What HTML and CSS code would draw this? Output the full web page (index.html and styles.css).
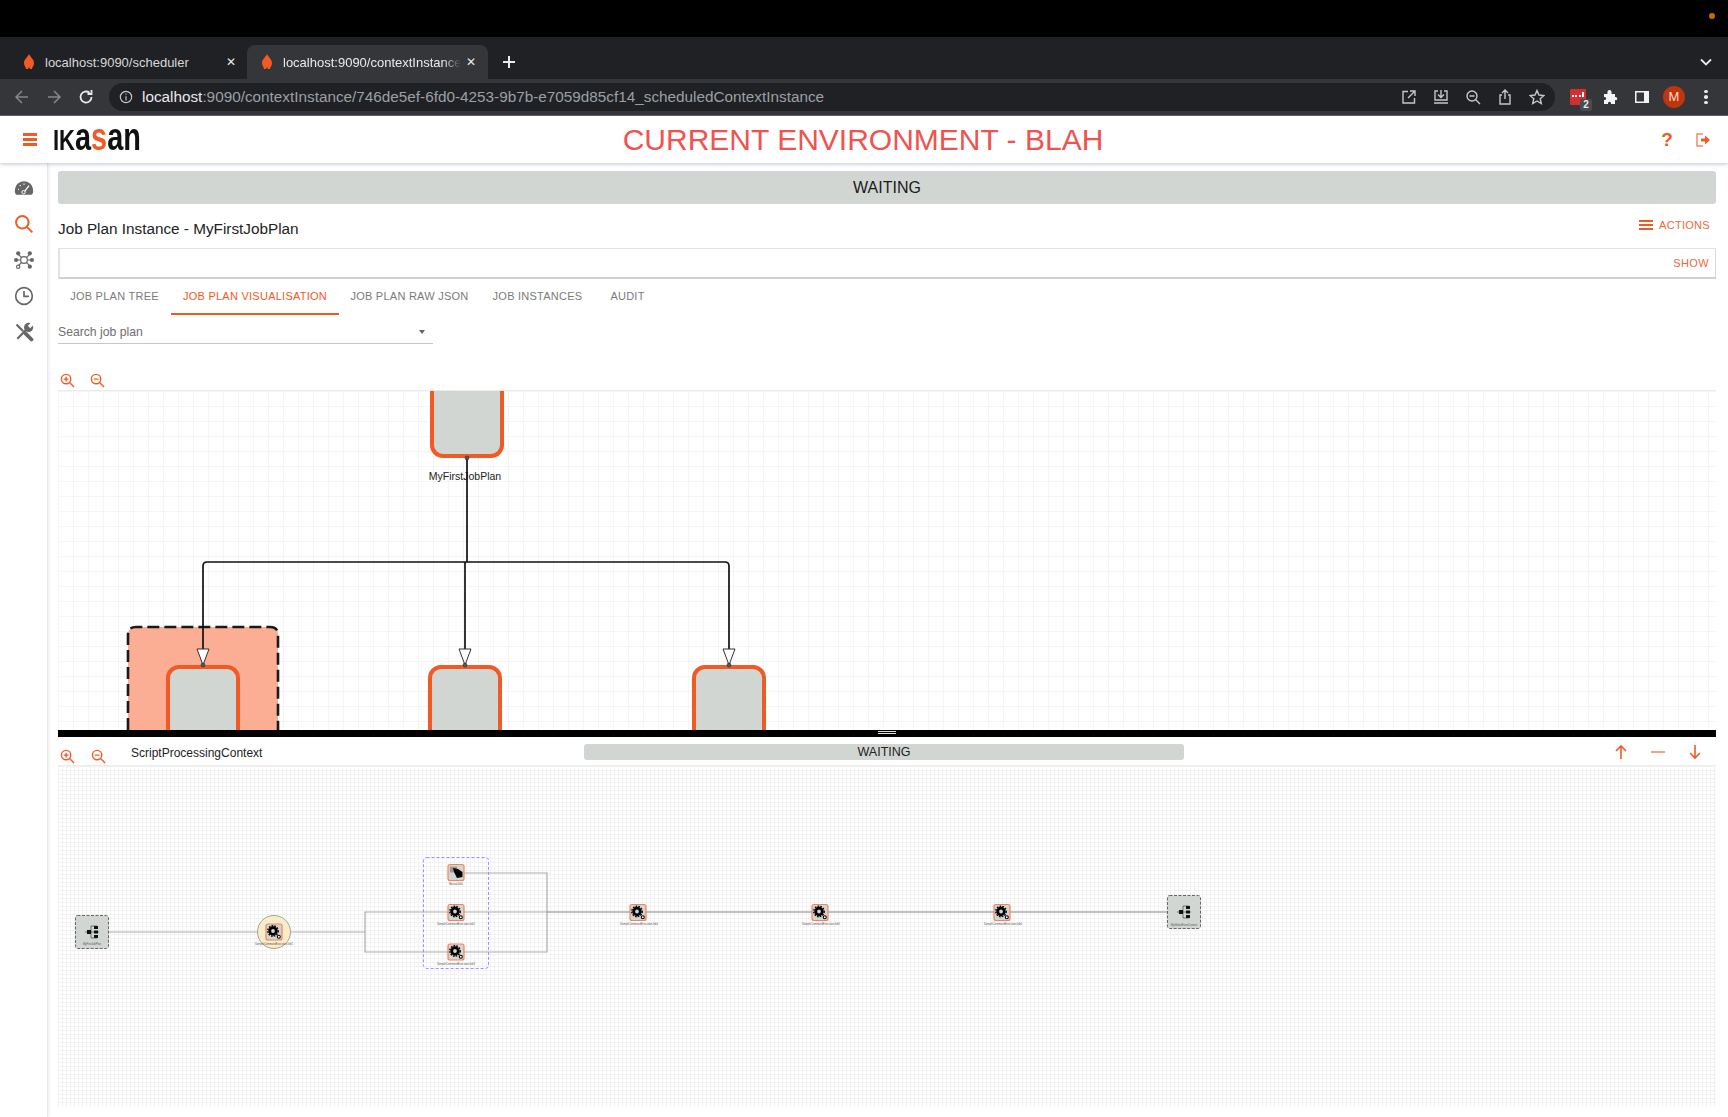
FILE: index.html
```html
<!DOCTYPE html>
<html>

<head>
    <meta http-equiv="Content-Type" content="text/html; charset=utf-8" />
    <title>Job Plan Instance</title>
    <link rel="stylesheet" href="styles.css">
</head>

<body>
    <div class="osbar"><span class="osdot"></span></div>

    <!-- browser chrome -->
    <div class="tabstrip">
        <div class="btab">
            <svg class="fav" viewBox="0 0 12 16"><path d="M6 0 C7 3 11 5 11 9 C11 12 9 13 9 15 L7 15 L6 13 L5 15 L3 15 C3 13 1 12 1 9 C1 5 5 3 6 0Z" /></svg>
            <span class="btab-text">localhost:9090/scheduler</span>
            <span class="btab-x">✕</span>
        </div>
        <div class="btab btab-on">
            <svg class="fav" viewBox="0 0 12 16"><path d="M6 0 C7 3 11 5 11 9 C11 12 9 13 9 15 L7 15 L6 13 L5 15 L3 15 C3 13 1 12 1 9 C1 5 5 3 6 0Z" /></svg>
            <span class="btab-text">localhost:9090/contextInstance</span>
            <span class="btab-x">✕</span>
        </div>
        <svg class="newtab" viewBox="0 0 14 14"><path d="M7 1V13M1 7H13" /></svg>
        <svg class="tabmenu" viewBox="0 0 12 8"><path d="M1 1.5L6 6.5L11 1.5" /></svg>
    </div>
    <div class="toolbar">
        <svg class="tb-btn dim" viewBox="0 0 16 16"><path d="M14 8H2M8 2L2 8L8 14" /></svg>
        <svg class="tb-btn dim" viewBox="0 0 16 16"><path d="M2 8H14M8 2L14 8L8 14" /></svg>
        <svg class="tb-btn" viewBox="0 0 16 16"><path d="M13.5 8A5.5 5.5 0 1 1 11.5 3.8M13.5 1V5H9.5" /></svg>
        <div class="urlbar">
            <svg class="u-info" viewBox="0 0 16 16"><circle cx="8" cy="8" r="6.5" /><path d="M8 7V12M8 4V5.5" /></svg>
            <span class="url"><b>localhost</b>:9090/contextInstance/746de5ef-6fd0-4253-9b7b-e7059d85cf14_scheduledContextInstance</span>
            <div class="u-icons">
                <svg viewBox="0 0 16 16"><path d="M7 2.500H2V14H13.500V9M9 2H14V7M14 2L7 9" /></svg>
                <svg viewBox="0 0 16 16"><path d="M5 2H2V11H14V2H11M8 1V8M5 5.500L8 8.500L11 5.500M1 14H15" /></svg>
                <svg viewBox="0 0 16 16"><circle cx="7" cy="7" r="5" /><path d="M4.500 7H9.500M10.500 10.500L15 15" /></svg>
                <svg viewBox="0 0 16 16"><path d="M5 6H3V15H13V6H11M8 10V1M5 4L8 1L11 4" /></svg>
                <svg viewBox="0 0 16 16"><path d="M8 1.500L10 6L15 6.500L11.200 9.700L12.300 14.500L8 12L3.700 14.500L4.800 9.700L1 6.500L6 6Z" /></svg>
            </div>
        </div>
        <div class="ext">
            <span class="ext-red"><i></i><i></i><i></i><i class="ext-bar"></i></span>
            <span class="ext-badge">2</span>
        </div>
        <svg class="puzzle" viewBox="0 0 16 16"><path d="M2 5H5.500C5 2 6 1 7.500 1S10 2 9.500 5H13V8C16 7.500 16 12 13 11V15H9C9.500 12 5.500 12 6 15H2V11C5 11.500 5 7.500 2 8Z" /></svg>
        <svg class="panel" viewBox="0 0 16 16"><path d="M1 2H15V14H1ZM2.500 3.500V12.500H10V3.500Z" fill-rule="evenodd" /></svg>
        <span class="avatar">M</span>
        <span class="kebab"><i></i><i></i><i></i></span>
    </div>

    <!-- app header -->
    <div class="header">
        <div class="burger"><i></i><i></i><i></i></div>
        <div class="logo"><span class="logo-in"><span class="logo-cap">IK</span>a<span class="logo-s">s</span>an</span></div>
        <div class="env">CURRENT ENVIRONMENT - BLAH</div>
        <span class="help">?</span>
        <svg class="logout" viewBox="0 0 16 16"><path class="lo-box" d="M8 2H2V14H8" /><path class="lo-arrow" d="M6 6.500H10V3.500L15 8L10 12.500V9.500H6Z" /></svg>
    </div>

    <div class="page">
        <!-- side menu -->
        <div class="side">
            <svg viewBox="0 0 24 24"><path class="fill" d="M12 4C5.500 4 1 9 1 16C1 18 2 20 3 20H21C22 20 23 18 23 16C23 9 18.500 4 12 4Z" /><path class="cut" d="M12 17L18 9" /><circle class="cutdot" cx="11.500" cy="17" r="2" /><path class="cut" d="M5 13.500H6M12 6.500V8M7 8.500L8 9.500" /></svg>
            <svg class="on" viewBox="0 0 24 24"><circle cx="10" cy="10" r="7.500" /><path d="M15.500 15.500L22 22" /></svg>
            <svg class="net" viewBox="0 0 24 24"><circle cx="12" cy="12" r="4" /><path d="M9 9L5 5M15 9L19 5M9 15L5 19M15 15L19 19M8 12H3M16 12H21" /><circle class="fill" cx="5" cy="4" r="2.500" /><circle class="fill" cx="19" cy="4" r="2.500" /><circle class="fill" cx="2.500" cy="12" r="2.500" /><circle class="fill" cx="21.500" cy="12" r="2.500" /><circle cx="5" cy="20" r="2" /><circle class="fill" cx="19" cy="20" r="2.500" /></svg>
            <svg viewBox="0 0 24 24"><circle cx="12" cy="12" r="10" /><path d="M12 6V12.500H18" /></svg>
            <svg viewBox="0 0 24 24"><path class="shaft" d="M3 3L11 11" /><path class="grip" d="M14 14L21 21" /><path class="shaft" d="M4 20L15 9" /><circle class="fill" cx="17.500" cy="6.500" r="5.500" /><path class="notch" d="M18 6L24 0" /></svg>
        </div>

        <div class="main">
            <div class="state-bar">WAITING</div>
            <div class="title-row">
                <div class="title">Job Plan Instance - MyFirstJobPlan</div>
                <div class="actions"><span class="act-ic"><i></i><i></i><i></i></span>ACTIONS</div>
            </div>
            <div class="showbox"><span>SHOW</span></div>
            <div class="tabs">
                <a class="tab-1" href="javascript:;">JOB PLAN TREE</a>
                <a class="tab-2 active" href="javascript:;">JOB PLAN VISUALISATION</a>
                <a class="tab-3" href="javascript:;">JOB PLAN RAW JSON</a>
                <a class="tab-4" href="javascript:;">JOB INSTANCES</a>
                <a class="tab-5" href="javascript:;">AUDIT</a>
            </div>
            <div class="search"><span>Search job plan</span><i class="caret"></i></div>
            <div class="zooms">
                <svg viewBox="0 0 16 16"><circle cx="6.500" cy="6.500" r="5" /><path d="M10.500 10.500L15 15M4 6.500H9M6.500 4V9" /></svg>
                <svg viewBox="0 0 16 16"><circle cx="6.500" cy="6.500" r="5" /><path d="M10.500 10.500L15 15M4 6.500H9" /></svg>
            </div>

            <!-- job plan canvas -->
            <div class="canvas-top">
                <svg class="plan" viewBox="58 390 1658 340" width="1658" height="340">
                    <rect class="job" x="432" y="376" width="70" height="80" rx="11" />
                    <text class="job-label" x="465" y="480">MyFirstJobPlan</text>
                    <path class="ctx" d="M128 730V635Q128 627 136 627H270Q278 627 278 635V730" />
                    <path class="ctx-dash" d="M128 730V635Q128 627 136 627H270Q278 627 278 635V730" />
                    <rect class="job" x="168" y="667" width="70" height="90" rx="11" />
                    <rect class="job" x="430" y="667" width="70" height="90" rx="11" />
                    <rect class="job" x="694" y="667" width="70" height="90" rx="11" />
                    <path class="edge" d="M467 458V562" />
                    <path class="edge" d="M465 562V650" />
                    <path class="edge" d="M467 562H207Q203 562 203 566V650" />
                    <path class="edge" d="M467 562H725Q729 562 729 566V650" />
                    <path class="head" d="M197 649H209L203 665Z" />
                    <path class="head" d="M459 649H471L465 665Z" />
                    <path class="head" d="M723 649H735L729 665Z" />
                    <circle class="port" cx="467" cy="458" r="2" />
                    <circle class="port" cx="203" cy="665" r="2" />
                    <circle class="port" cx="465" cy="665" r="2" />
                    <circle class="port" cx="729" cy="665" r="2" />
                </svg>
            </div>
            <div class="divider"><i></i></div>

            <div class="ctx-row">
                <div class="zooms zooms-low">
                    <svg viewBox="0 0 16 16"><circle cx="6.500" cy="6.500" r="5" /><path d="M10.500 10.500L15 15M4 6.500H9M6.500 4V9" /></svg>
                    <svg viewBox="0 0 16 16"><circle cx="6.500" cy="6.500" r="5" /><path d="M10.500 10.500L15 15M4 6.500H9" /></svg>
                </div>
                <div class="ctx-name">ScriptProcessingContext</div>
                <div class="ctx-state">WAITING</div>
                <div class="ctx-arrows">
                    <svg viewBox="0 0 16 16"><path d="M8 15V2M3 7L8 2L13 7" /></svg>
                    <svg viewBox="0 0 16 16"><path d="M1 8H15" /></svg>
                    <svg viewBox="0 0 16 16"><path d="M8 1V14M3 9L8 14L13 9" /></svg>
                </div>
            </div>

            <!-- context canvas -->
            <div class="canvas-low">
                <svg class="flow" viewBox="58 764 1658 341" width="1658" height="341">
                    <defs>
                        <g id="gears">
                            <circle class="g-big" cx="7" cy="7" r="3.300" />
                            <circle class="g-teeth" cx="7" cy="7" r="5.200" />
                            <circle class="g-small" cx="12.800" cy="12.800" r="1.500" />
                        </g>
                        <g id="tree">
                            <path d="M-7 0H7M-1 -6V6M-1 -6H5M-1 6H5" class="t-line" />
                            <rect x="-5" y="-2" width="4" height="4" />
                            <rect x="2" y="-6" width="4" height="3" />
                            <rect x="2" y="-1.500" width="4" height="3" />
                            <rect x="2" y="3" width="4" height="3" />
                        </g>
                    </defs>

                    <path class="wire" d="M109 931H258" />
                    <path class="wire" d="M290 931H365V911H448" />
                    <path class="wire" d="M365 931V951H448" />
                    <path class="wire" d="M464 872H547V951H464" />
                    <path class="wire" d="M464 911H547" />
                    <path class="wire-dark" d="M547 911H630M646 911H812M828 911H994M1010 911H1167" />

                    <rect class="ctx-sel" x="423.500" y="856.500" width="65" height="111" rx="3" />

                    <rect class="gate" x="75.500" y="914.500" width="33" height="33" rx="2" />
                    <use href="#tree" x="92" y="931" />
                    <text class="tiny" x="92" y="944">MyFirstJobPlan</text>

                    <circle class="running" cx="274" cy="931" r="16.500" />
                    <rect class="task" x="266" y="923" width="16" height="16" rx="2" />
                    <use href="#gears" x="266" y="923" />
                    <text class="tiny" x="274" y="944">SampleCommandExecutionJob1</text>

                    <rect class="task" x="448" y="863.500" width="16" height="16" rx="2" />
                    <rect class="hand-box" x="450" y="865.500" width="7" height="6" />
                    <path class="hand" d="M453 867L458 868L462.500 871V876L457 877L454 871Z" />
                    <text class="tiny" x="456" y="884">ManualJob1</text>

                    <rect class="task" x="448" y="903.500" width="16" height="16" rx="2" />
                    <use href="#gears" x="448" y="903.500" />
                    <text class="tiny" x="456" y="924">SampleCommandExecutionJob2</text>

                    <rect class="task" x="448" y="943" width="16" height="16" rx="2" />
                    <use href="#gears" x="448" y="943" />
                    <text class="tiny" x="456" y="964">SampleCommandExecutionJob3</text>

                    <rect class="task" x="630" y="903.500" width="16" height="16" rx="2" />
                    <use href="#gears" x="630" y="903.500" />
                    <text class="tiny" x="639" y="924">SampleCommandExecutionJob4</text>

                    <rect class="task" x="812" y="903.500" width="16" height="16" rx="2" />
                    <use href="#gears" x="812" y="903.500" />
                    <text class="tiny" x="821" y="924">SampleCommandExecutionJob5</text>

                    <rect class="task" x="994" y="903.500" width="16" height="16" rx="2" />
                    <use href="#gears" x="994" y="903.500" />
                    <text class="tiny" x="1003" y="924">SampleCommandExecutionJob6</text>

                    <rect class="gate" x="1167.500" y="894.500" width="33" height="33" rx="2" />
                    <use href="#tree" x="1184" y="911" />
                    <text class="tiny" x="1184" y="925">MyGlobalEventContext</text>
                </svg>
            </div>
        </div>
    </div>
</body>

</html>
```

FILE: styles.css
```css
* {
    margin: 0;
    padding: 0;
    box-sizing: border-box;
}

html,
body {
    width: 1728px;
    height: 1117px;
    overflow: hidden;
    background: #fff;
    font-family: "Liberation Sans", Arial, sans-serif;
}

/* os + browser */
.osbar {
    height: 37px;
    background: #000;
    display: flex;
    justify-content: flex-end;
    align-items: center;
    padding: 0 13px 5px 0;
}

.osdot {
    width: 6px;
    height: 6px;
    border-radius: 50%;
    background: #c96a08;
}

.tabstrip {
    height: 42px;
    background: #202124;
    display: flex;
    align-items: flex-end;
    padding-left: 8px;
    position: relative;
}

.btab {
    width: 240px;
    height: 34px;
    display: flex;
    align-items: center;
    padding: 0 10px 0 15px;
    color: #d6d8da;
    font-size: 13px;
    border-radius: 8px 8px 0 0;
}

.btab-on {
    width: 241px;
    margin-left: -1px;
    background: #35363a;
    padding: 0 10px 0 14px;
    color: #e8eaed;
}

.fav {
    width: 12px;
    height: 16px;
    fill: #f15a24;
    flex: none;
    margin-right: 10px;
}

.btab-text {
    flex: 1;
    overflow: hidden;
    white-space: nowrap;
}

.btab-on .btab-text {
    -webkit-mask-image: linear-gradient(90deg, #000 90%, transparent);
    mask-image: linear-gradient(90deg, #000 90%, transparent);
}

.btab-x {
    width: 14px;
    margin-left: 3px;
    font-size: 12px;
    text-align: center;
    color: #e8eaed;
}

.newtab {
    width: 14px;
    height: 14px;
    margin: 0 0 10px 14px;
    fill: none;
    stroke: #e8eaed;
    stroke-width: 2;
}

.tabmenu {
    width: 12px;
    height: 8px;
    fill: none;
    stroke: #e8eaed;
    stroke-width: 1.800;
    margin: 0 16px 13px auto;
}

.toolbar {
    height: 37px;
    background: #35363a;
    border-bottom: 1px solid #5f6368;
    display: flex;
    align-items: center;
    padding-left: 14px;
}

.tb-btn {
    width: 16px;
    height: 16px;
    margin-right: 16px;
    fill: none;
    stroke: #e8eaed;
    stroke-width: 1.800;
    flex: none;
}

.tb-btn.dim {
    stroke: #85878a;
    stroke-width: 1.500;
}

.urlbar {
    width: 1446px;
    height: 28px;
    margin-left: -1px;
    background: #202124;
    border-radius: 14px;
    display: flex;
    align-items: center;
    padding-left: 10px;
    color: #9aa0a6;
}

.u-info {
    width: 14px;
    height: 14px;
    fill: none;
    stroke: #c4c7ca;
    stroke-width: 1.300;
    flex: none;
    margin-right: 9px;
}

.url {
    font-size: 15.300px;
    white-space: nowrap;
}

.url b {
    font-weight: normal;
    color: #e8eaed;
}

.u-icons {
    margin-left: auto;
    display: flex;
    align-items: center;
    gap: 16px;
    padding-right: 10px;
}

.u-icons svg {
    width: 16px;
    height: 16px;
    fill: none;
    stroke: #c4c7ca;
    stroke-width: 1.400;
}

.ext {
    width: 16px;
    height: 16px;
    margin-left: 15px;
    position: relative;
}

.ext-red {
    width: 16px;
    height: 16px;
    background: #d32f2f;
    border-radius: 1px;
    display: flex;
    align-items: center;
    justify-content: center;
    gap: 1.500px;
    padding-bottom: 2px;
}

.ext-red i {
    display: block;
    width: 2px;
    height: 2px;
    background: #fff;
}

.ext-red .ext-bar {
    height: 5px;
    margin-top: -3px;
}

.ext-badge {
    position: absolute;
    left: 10px;
    top: 10px;
    width: 12px;
    height: 12px;
    background: #4a4b4e;
    border-radius: 2px;
    color: #e8eaed;
    font-size: 10px;
    font-weight: bold;
    line-height: 12px;
    text-align: center;
}

.puzzle {
    width: 16px;
    height: 16px;
    margin-left: 16px;
    fill: #f1f3f4;
}

.panel {
    width: 16px;
    height: 16px;
    margin-left: 16px;
    fill: #f1f3f4;
}

.avatar {
    width: 22px;
    height: 22px;
    margin-left: 13px;
    border-radius: 50%;
    background: #bf360c;
    color: #f5d9cf;
    font-size: 13px;
    line-height: 22px;
    text-align: center;
}

.kebab {
    width: 4px;
    margin-left: 19px;
    display: flex;
    flex-direction: column;
    gap: 2px;
}

.kebab i {
    display: block;
    height: 3.500px;
    border-radius: 50%;
    background: #e8eaed;
}

/* header */
.header {
    height: 47px;
    background: #fff;
    display: flex;
    align-items: center;
    padding-left: 23px;
    position: relative;
    z-index: 2;
    box-shadow: 0 1px 4px rgba(70, 80, 130, .35);
}

.burger {
    width: 14px;
    display: flex;
    flex-direction: column;
    gap: 2px;
}

.burger i {
    display: block;
    height: 3px;
    background: #f15a24;
}

.logo {
    width: 88px;
    height: 34px;
    margin-left: 16px;
    line-height: 34px;
    font-size: 38px;
    font-weight: bold;
    color: #111;
    white-space: nowrap;
}

.logo-in {
    display: inline-block;
    transform: scaleX(.76);
    transform-origin: 0 50%;
    margin-top: -3px;
    vertical-align: top;
}

.logo-cap {
    font-size: 29px;
}

.logo-s {
    color: #f15a24;
}

.env {
    position: absolute;
    left: 0;
    width: 1726px;
    text-align: center;
    color: #ef5350;
    font-size: 30px;
    line-height: 47px;
}

.help {
    margin-left: auto;
    color: #f15a24;
    font-size: 19px;
    font-weight: bold;
    width: 12px;
    text-align: center;
    margin-right: 22px;
}

.logout {
    width: 16px;
    height: 16px;
    margin-right: 17px;
}

.lo-box {
    fill: none;
    stroke: #f78a66;
    stroke-width: 1.500;
}

.lo-arrow {
    fill: #f15a24;
}

/* page */
.page {
    display: flex;
    height: 954px;
}

.side {
    width: 48px;
    flex: none;
    border-right: 1px solid #e6e6e6;
    box-shadow: 1px 0 3px rgba(0, 0, 0, .08);
    display: flex;
    flex-direction: column;
    align-items: center;
    padding: 15px 0 0 0;
    gap: 16px;
}

.side svg {
    width: 20px;
    height: 20px;
    fill: none;
    stroke: #666;
    stroke-width: 2;
}

.side svg.on {
    stroke: #f15a24;
    stroke-width: 2.400;
}

.side svg.net {
    stroke-width: 1.400;
}

.side .fill {
    fill: #666;
    stroke: none;
}

.side .cut {
    stroke: #fff;
    stroke-width: 1.500;
}

.side .cutdot {
    fill: #666;
    stroke: #fff;
    stroke-width: 1.200;
}

.side .shaft {
    stroke-width: 2.600;
}

.side .grip {
    stroke-width: 4.500;
    stroke-linecap: round;
}

.side .notch {
    stroke: #fff;
    stroke-width: 4;
}

.main {
    width: 1658px;
    margin-left: 10px;
    display: flex;
    flex-direction: column;
    padding-top: 8px;
}

.state-bar {
    height: 33px;
    background: #d2d6d2;
    border-radius: 3px;
    text-align: center;
    line-height: 33px;
    font-size: 16px;
    color: #1a1a1a;
}

.title-row {
    display: flex;
    justify-content: space-between;
    align-items: center;
    height: 44px;
}

.title {
    font-size: 15.300px;
    color: #222;
    margin-top: 6px;
}

.actions {
    display: flex;
    align-items: center;
    color: #f4663a;
    font-size: 11px;
    letter-spacing: .3px;
    padding-right: 6px;
    margin-top: -2px;
}

.act-ic {
    width: 14px;
    margin-right: 6px;
    display: flex;
    flex-direction: column;
    gap: 1.500px;
}

.act-ic i {
    display: block;
    height: 2.500px;
    background: #f15a24;
}

.showbox {
    height: 31px;
    border: 1px solid #d4d4d4;
    border-width: 1px 1px 2px 2px;
    border-color: #e2e2e2 #d8d8d8 #d0d0d0 #e2e2e2;
    display: flex;
    align-items: center;
    justify-content: flex-end;
    padding-right: 6px;
    color: #f4663a;
    font-size: 11px;
    letter-spacing: .4px;
}

.tabs {
    display: flex;
    height: 36px;
}

.tabs a {
    display: block;
    text-decoration: none;
    color: #7a7a7a;
    font-size: 11px;
    letter-spacing: .25px;
    text-align: center;
    line-height: 35px;
}

.tabs .tab-1 {
    width: 113px;
}

.tabs .tab-2 {
    width: 168px;
}

.tabs .tab-3 {
    width: 141px;
}

.tabs .tab-4 {
    width: 115px;
}

.tabs .tab-5 {
    width: 65px;
}

.tabs a.active {
    color: #f15a24;
    border-bottom: 2px solid #f15a24;
}

.search {
    width: 375px;
    height: 29px;
    border-bottom: 1px solid #c6c6c6;
    display: flex;
    align-items: center;
    justify-content: space-between;
    padding: 5px 8px 0 0;
    color: #6e6e6e;
    font-size: 12.200px;
}

.caret {
    width: 0;
    height: 0;
    border: 3.500px solid transparent;
    border-top: 4px solid #666;
    border-bottom: 0;
}

.zooms {
    height: 46px;
    display: flex;
    align-items: flex-end;
    gap: 15px;
    padding: 0 0 2px 2px;
}

.zooms svg {
    width: 15px;
    height: 15px;
    fill: none;
    stroke: #f15a24;
    stroke-width: 1.500;
}

.canvas-top {
    height: 340px;
    border-top: 1px solid #ececec;
    overflow: hidden;
    background-color: #fff;
    background-image: linear-gradient(#f5f5f5 1px, transparent 1px), linear-gradient(90deg, #f5f5f5 1px, transparent 1px);
    background-size: 15px 15px;
    position: relative;
}

.plan {
    display: block;
    margin-top: -1px;
}

.job {
    fill: #d2d6d2;
    stroke: #f15a24;
    stroke-width: 4;
}

.ctx {
    fill: #fcae94;
}

.ctx-dash {
    fill: none;
    stroke: #1a1a1a;
    stroke-width: 2.600;
    stroke-dasharray: 12 5;
}

.edge {
    fill: none;
    stroke: #111;
    stroke-width: 1.700;
}

.head {
    fill: #fff;
    stroke: #333;
    stroke-width: 1;
}

.port {
    fill: #455a64;
    stroke: #222;
    stroke-width: .5;
}

.job-label {
    font-size: 10.500px;
    fill: #222;
    text-anchor: middle;
}

.divider {
    height: 7px;
    background: #000;
    display: flex;
    justify-content: center;
}

.divider i {
    display: block;
    width: 18px;
    height: 3px;
    margin-top: 1px;
    border-top: 1px solid #ddd;
    border-bottom: 1px solid #ddd;
}

.ctx-row {
    height: 28px;
    display: flex;
    align-items: center;
    position: relative;
}

.zooms-low {
    height: 15px;
    width: 73px;
    padding: 0 0 0 2px;
    gap: 16px;
    margin-top: 10px;
    flex: none;
}

.ctx-name {
    width: 453px;
    flex: none;
    font-size: 12px;
    color: #222;
    margin-top: 4px;
}

.ctx-state {
    width: 600px;
    height: 16px;
    margin-top: 2px;
    background: #d2d6d2;
    border-radius: 3px;
    text-align: center;
    font-size: 12.500px;
    line-height: 17px;
    color: #222;
}

.ctx-arrows {
    position: absolute;
    right: 13px;
    top: 7px;
    display: flex;
    gap: 21px;
}

.ctx-arrows svg {
    width: 16px;
    height: 16px;
    fill: none;
    stroke: #f15a24;
    stroke-width: 1.600;
}

.ctx-arrows svg:nth-child(2) {
    stroke: #f78a66;
}

.canvas-low {
    height: 341px;
    overflow: hidden;
    border-top: 1px solid #ececec;
    background-color: #fff;
    background-image: linear-gradient(#f2f2f2 1px, transparent 1px), linear-gradient(90deg, #f2f2f2 1px, transparent 1px);
    background-size: 4px 4px;
}

.flow {
    display: block;
    margin-top: -1px;
}

.wire {
    fill: none;
    stroke: #adadad;
    stroke-width: 1.200;
}

.wire-dark {
    fill: none;
    stroke: #777;
    stroke-width: .9;
}

.ctx-sel {
    fill: none;
    stroke: #a78bfa;
    stroke-width: 1;
    stroke-dasharray: 3 2;
}

.gate {
    fill: #d2d6d2;
    stroke: #666;
    stroke-width: 1;
    stroke-dasharray: 3 1.500;
}

#tree rect {
    fill: #111;
}

.t-line {
    fill: none;
    stroke: #333;
    stroke-width: .6;
}

.running {
    fill: #f8ecc9;
    stroke: #a8a48f;
    stroke-width: 1;
}

.task {
    fill: #d2d6d2;
    stroke: #f4825c;
    stroke-width: 1.200;
}

.g-big {
    fill: none;
    stroke: #000;
    stroke-width: 2.800;
}

.g-teeth {
    fill: none;
    stroke: #000;
    stroke-width: 1.400;
    stroke-dasharray: 1.600 1.200;
}

.g-small {
    fill: #fff;
    stroke: #000;
    stroke-width: 1.100;
}

.hand-box {
    fill: #999;
}

.hand {
    fill: #000;
}

.tiny {
    font-size: 2.600px;
    fill: #555;
    text-anchor: middle;
}
```
